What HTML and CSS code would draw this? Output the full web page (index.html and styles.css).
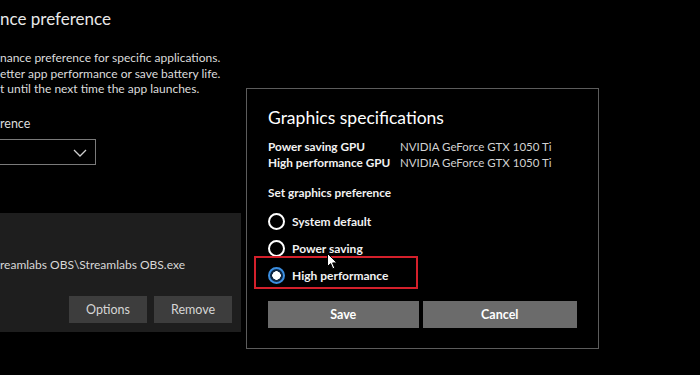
FILE: index.html
```html
<!DOCTYPE html>
<html>
<head>
  <title>Graphics settings</title>
  <link rel="stylesheet" href="styles.css">
</head>
<body>
  <div class="screen">
    <section class="settings">
      <h1 class="page-title">nce preference</h1>
      <p class="intro">
        nance preference for specific applications.<br>
        etter app performance or save battery life.<br>
        t until the next time the app launches.
      </p>

      <label class="field-label" for="app-type">rence</label>
      <div class="select-box" id="app-type">
        <svg class="chevron" width="14" height="8" viewBox="0 0 14 8">
          <path d="M1 1 L7 7 L13 1" fill="none" stroke="#cfcfcf" stroke-width="1.3"/>
        </svg>
      </div>

      <div class="app-card">
        <div class="app-path">reamlabs OBS\Streamlabs OBS.exe</div>
        <div class="card-actions">
          <button type="button" class="card-btn">Options</button>
          <button type="button" class="card-btn">Remove</button>
        </div>
      </div>
    </section>

    <div class="dialog">
      <h2 class="dialog-title">Graphics specifications</h2>

      <div class="specs">
        <span class="spec-name">Power saving GPU</span>
        <span class="spec-value">NVIDIA GeForce GTX 1050 Ti</span>
        <span class="spec-name">High performance GPU</span>
        <span class="spec-value">NVIDIA GeForce GTX 1050 Ti</span>
      </div>

      <div class="pref-label">Set graphics preference</div>

      <div class="options">
        <label class="option">
          <span class="radio"></span>
          System default
        </label>
        <label class="option">
          <span class="radio"></span>
          Power saving
        </label>
        <label class="option option-marked">
          <span class="radio radio-on"></span>
          High performance
        </label>
      </div>

      <div class="dialog-actions">
        <button type="button" class="dialog-btn save">Save</button>
        <button type="button" class="dialog-btn cancel">Cancel</button>
      </div>

      <svg class="cursor" width="11" height="17" viewBox="0 0 11 17">
        <path d="M0.5 0.5 L0.5 13.5 L3.6 10.6 L5.8 15.8 L7.8 15 L5.6 9.9 L10 9.9 Z" fill="#fff" stroke="#000" stroke-width="1"/>
      </svg>
    </div>
  </div>
</body>
</html>
```

FILE: styles.css
```css
body {
  margin: 0;
  background-color: #000;
  font-family: "Lato", "Open Sans", sans-serif;
  color: #fff;
}

.screen {
  display: flex;
  align-items: flex-start;
  width: 700px;
  height: 375px;
  overflow: hidden;
}

/* settings page behind the dialog */
.settings {
  width: 241px;
  flex-shrink: 0;
  padding-top: 6px;
}

.page-title {
  margin: 0 0 18px 0;
  font-size: 17px;
  font-weight: 400;
  line-height: 26px;
  color: #e8e8e8;
}

.intro {
  margin: 0 0 18px 0;
  font-size: 12px;
  line-height: 15.5px;
  color: #dcdcdc;
}

.field-label {
  display: block;
  margin-bottom: 6px;
  font-size: 12.5px;
  line-height: 18px;
  color: #dcdcdc;
}

.select-box {
  position: relative;
  width: 104px;
  height: 24px;
  margin-left: -10px;
  border: 1px solid #7a7a7a;
}

.chevron {
  position: absolute;
  right: 8px;
  top: 9px;
}

.app-card {
  margin-top: 48px;
  height: 119px;
  padding: 0 9px 0 0;
  background-color: #1e1e1e;
  box-sizing: border-box;
}

.app-path {
  padding-top: 43px;
  font-size: 12px;
  line-height: 17px;
  color: #d8d8d8;
}

.card-actions {
  display: flex;
  justify-content: flex-end;
  gap: 7px;
  margin-top: 23px;
}

.card-btn {
  width: 78px;
  height: 27px;
  border: none;
  background-color: #3d3d3d;
  color: #d6d6d6;
  font-family: inherit;
  font-size: 12.5px;
}

/* the dialog */
.dialog {
  position: relative;
  width: 353px;
  height: 261px;
  margin: 88px 0 0 5px;
  padding: 0 21px 0 21px;
  box-sizing: border-box;
  border: 1px solid #5c5c5c;
  background-color: #000;
}

.dialog-title {
  margin: 16px 0 9px 0;
  font-size: 17.5px;
  font-weight: 400;
  line-height: 25px;
  color: #fff;
}

.specs {
  display: grid;
  grid-template-columns: 132px auto;
  line-height: 16px;
}

.spec-name {
  font-size: 11.8px;
  font-weight: 700;
  color: #f2f2f2;
}

.spec-value {
  font-size: 11.5px;
  color: #d2d2d2;
}

.pref-label {
  margin: 14px 0 12px 0;
  font-size: 11.8px;
  font-weight: 700;
  line-height: 16px;
  color: #f2f2f2;
}

.options {
  display: flex;
  flex-direction: column;
  gap: 10px;
}

.option {
  position: relative;
  display: flex;
  align-items: center;
  gap: 7px;
  height: 17px;
  font-size: 12px;
  font-weight: 700;
  color: #f2f2f2;
}

.radio {
  width: 17px;
  height: 17px;
  box-sizing: border-box;
  border: 2px solid #fff;
  border-radius: 50%;
}

.radio-on {
  border-color: #3b8ee0;
  background: radial-gradient(circle, #fff 0 4px, #0d2540 4.5px);
}

.option-marked::after {
  content: "";
  position: absolute;
  left: -14px;
  top: -11px;
  width: 164px;
  height: 33px;
  box-sizing: border-box;
  border: 2px solid #d4202b;
}

.dialog-actions {
  display: flex;
  gap: 4px;
  margin-top: 17px;
}

.dialog-btn {
  height: 27px;
  border: none;
  background-color: #6b6b6b;
  color: #fff;
  font-family: inherit;
  font-size: 12.5px;
  font-weight: 700;
}

.save {
  width: 151px;
}

.cancel {
  width: 155px;
}

.cursor {
  position: absolute;
  left: 80px;
  top: 164px;
}
```
